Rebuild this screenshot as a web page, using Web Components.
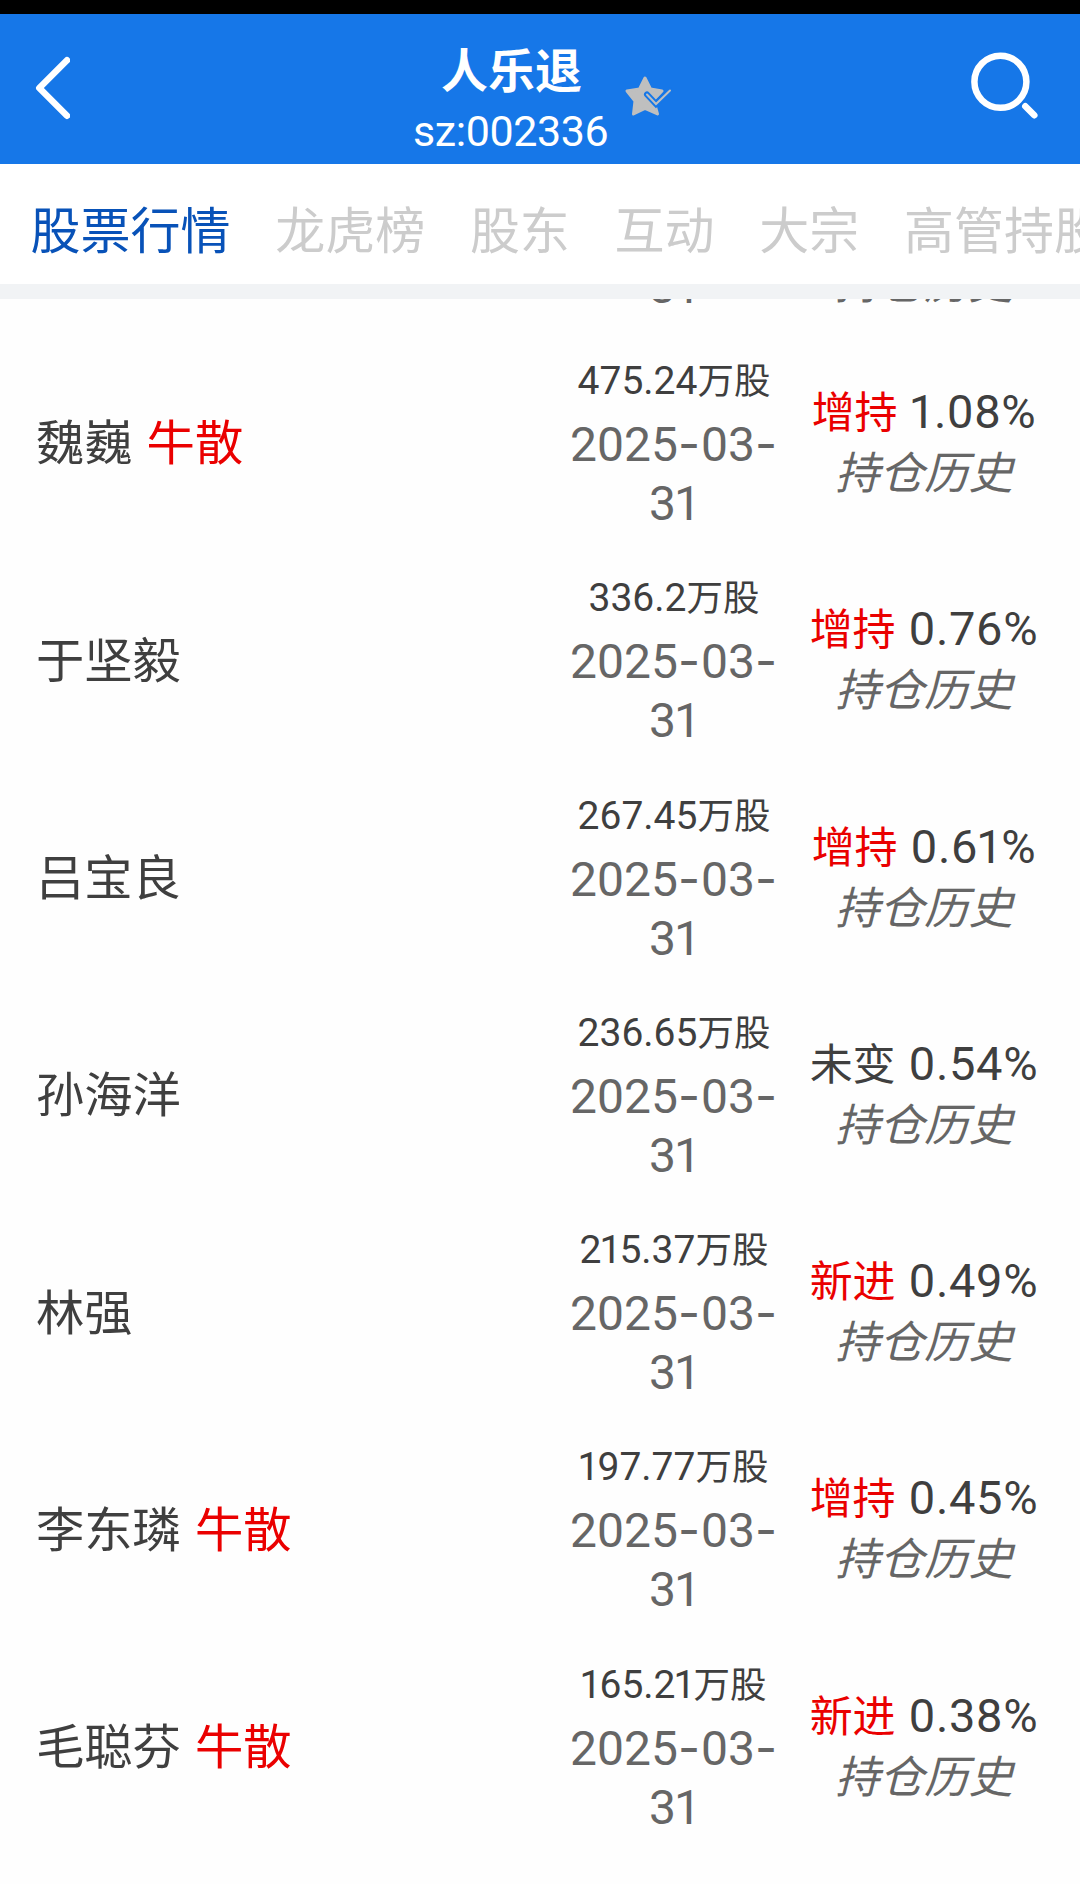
<!DOCTYPE html>
<html lang="zh-CN">
<head>
<meta charset="utf-8">
<title>人乐退</title>
<style>
	body {
		margin: 0;
		height: 1884px;
		display: flex;
		flex-direction: column;
		overflow: hidden;
		background: #fefefe;
		color: #3f3f3f;
		font-family: Roboto, "Noto Sans CJK SC", sans-serif;
	}
</style>
</head>
<body>
<stock-header name="人乐退" code="sz:002336"></stock-header>
<stock-tabs>
	<stock-tab active>股票行情</stock-tab>
	<stock-tab>龙虎榜</stock-tab>
	<stock-tab>股东</stock-tab>
	<stock-tab>互动</stock-tab>
	<stock-tab>大宗</stock-tab>
	<stock-tab>高管持股</stock-tab>
</stock-tabs>
<holder-list>
	<holder-row tall></holder-row>
	<holder-row shares="475.24" change="增持" ratio="1.08%" tag="牛散">魏巍</holder-row>
	<holder-row shares="336.2" change="增持" ratio="0.76%">于坚毅</holder-row>
	<holder-row shares="267.45" change="增持" ratio="0.61%">吕宝良</holder-row>
	<holder-row shares="236.65" change="未变" ratio="0.54%">孙海洋</holder-row>
	<holder-row shares="215.37" change="新进" ratio="0.49%">林强</holder-row>
	<holder-row shares="197.77" change="增持" ratio="0.45%" tag="牛散">李东璘</holder-row>
	<holder-row shares="165.21" change="新进" ratio="0.38%" tag="牛散">毛聪芬</holder-row>
</holder-list>

<script>
customElements.define('stock-header', class extends HTMLElement
{
	connectedCallback()
	{
		const shadow = this.attachShadow({ mode: 'open' });

		shadow.innerHTML = `
			<style>
				:host {
					flex: none;
					box-sizing: border-box;
					height: 164px;
					border-top: 14px solid #000;
					background: #1677e8;
					color: #fff;
					display: grid;
					grid-template-columns: 413px 195px 1fr auto;
				}
				svg {
					display: block;
					fill: none;
					stroke: #fff;
					stroke-linecap: round;
				}
				.back {
					margin: 40px 0 0 30px;
				}
				.title {
					text-align: center;
					white-space: nowrap;
				}
				.name {
					padding: 30px 0 0 2px;
					font-size: 47px;
					font-weight: 700;
					line-height: 56px;
				}
				.code {
					font-size: 43px;
					line-height: 62px;
					letter-spacing: -.4px;
				}
				.star {
					margin: 59px 0 0 14px;
				}
				.search {
					margin: 36px 37px 0 0;
				}
			</style>
			<svg class="back" width="40" height="70" stroke-width="6.5" stroke-linejoin="round"><path d="M37 6.200 9.300 34 37 61.800"/></svg>
			<div class="title">
				<div class="name">${this.getAttribute('name')}</div>
				<div class="code">${this.getAttribute('code')}</div>
			</div>
			<svg class="star" width="52" height="46">
				<path d="M23 5l5.500 11L40 18l-8.500 9L35.500 41 23 35.500 11.500 41 13 28 5 18l12.500-2z" fill="#bfbfbf" stroke="#bfbfbf" stroke-width="3" stroke-linejoin="round"/>
				<path d="M25 21.500l9 9.500L48 17.500" stroke="#1677e8" stroke-width="6"/>
				<path d="M25 21.500l9 9.500L48 17.500" stroke="#bfbfbf" stroke-width="2"/>
			</svg>
			<svg class="search" width="76" height="76" stroke-width="6.5"><circle cx="33.400" cy="31.800" r="26"/><path d="M58.300 56.300l9 9"/></svg>
		`;
	}
});

customElements.define('stock-tabs', class extends HTMLElement
{
	connectedCallback()
	{
		const shadow = this.attachShadow({ mode: 'open' });

		shadow.innerHTML = `
			<style>
				:host {
					flex: none;
					box-sizing: border-box;
					height: 135px;
					padding: 18px 0 0 30.5px;
					border-bottom: 15px solid #f1f3f5;
					display: flex;
					gap: 44.7px;
					overflow: hidden;
					background: #fff;
				}
			</style>
			<slot></slot>
		`;
	}
});

customElements.define('stock-tab', class extends HTMLElement
{
	connectedCallback()
	{
		const shadow = this.attachShadow({ mode: 'open' });

		shadow.innerHTML = `
			<style>
				:host {
					flex: none;
					font-size: 50px;
					line-height: 100px;
					white-space: nowrap;
					color: #ccc;
				}
				:host([active]) {
					color: #0852b8;
				}
			</style>
			<slot></slot>
		`;
	}
});

customElements.define('holder-list', class extends HTMLElement
{
	connectedCallback()
	{
		const shadow = this.attachShadow({ mode: 'open' });

		// the list is scrolled, so the first row is mostly above the edge
		shadow.innerHTML = `
			<style>
				:host {
					flex: 1;
					min-height: 0;
					overflow: hidden;
				}
				div {
					margin-top: -184px;
				}
			</style>
			<div><slot></slot></div>
		`;
	}
});

// wraps the narrow 1 and the wide hyphen, the other glyphs are left alone
function digits(text)
{
	return text.replace(/1/g, '<span class="one">1</span>').replace(/-/g, '<span class="dash">-</span>');
}

customElements.define('holder-row', class extends HTMLElement
{
	get changed()
	{
		return this.getAttribute('change') !== '未变';
	}

	connectedCallback()
	{
		holderRowTemplate.call(this);
	}
});

/** @this {HTMLElement} */
function holderRowTemplate()
{
	const shadow = this.attachShadow({ mode: 'open' });
	const shares = this.getAttribute('shares');
	const ratio = this.getAttribute('ratio');
	const tag = this.getAttribute('tag');

	shadow.innerHTML = `
		<style>
			:host {
				box-sizing: border-box;
				height: 217.3px;
				padding: 0 12px 0 36px;
				display: grid;
				grid-template-columns: 1fr 214px 288px;
				align-items: center;
				white-space: nowrap;
			}
			.name {
				padding-bottom: 3px;
				font-size: 48.3px;
				word-spacing: 2px;
			}
			.red {
				color: #ea0000;
			}
			.amount, .ratio {
				text-align: center;
			}
			.amount {
				padding: 1px 0 0 2px;
			}
			.shares {
				height: 65px;
				line-height: 65px;
				font-size: 36.5px;
			}
			.shares b {
				font-size: 39px;
			}
			b {
				font-weight: 400;
			}
			.date {
				color: #666;
				font-size: 48px;
				line-height: 60px;
			}
			.date div {
				height: 60px;
			}
			.one {
				margin: 0 -2px;
			}
			.dash {
				font-family: Inter;
				letter-spacing: 1px;
			}
			.ratio {
				padding-top: 3px;
			}
			.change {
				height: 60px;
				line-height: 60px;
				font-size: 43px;
				word-spacing: 2.5px;
			}
			:host([tall]) .change {
				height: 114px;
			}
			.change b {
				font-size: 47px;
				letter-spacing: .7px;
			}
			.history {
				display: block;
				color: #666;
				font-size: 44.5px;
				height: 61px;
				line-height: 65px;
				font-style: italic;
			}
		</style>
		<div class="name"><slot></slot>${tag ? ` <span class="red">${tag}</span>` : ''}</div>
		<div class="amount">
			<div class="shares">${shares ? `<b>${digits(shares)}</b>万股` : ''}</div>
			<div class="date">
				<div>${shares ? digits('2025-03-') : ''}</div>
				<div>${digits('31')}</div>
			</div>
		</div>
		<div class="ratio">
			<div class="change">${ratio ? `<span class="${this.changed ? 'red' : ''}">${this.getAttribute('change')}</span> <b>${digits(ratio)}</b>` : ''}</div>
			<i class="history">持仓历史</i>
		</div>
	`;
}
</script>
</body>
</html>
